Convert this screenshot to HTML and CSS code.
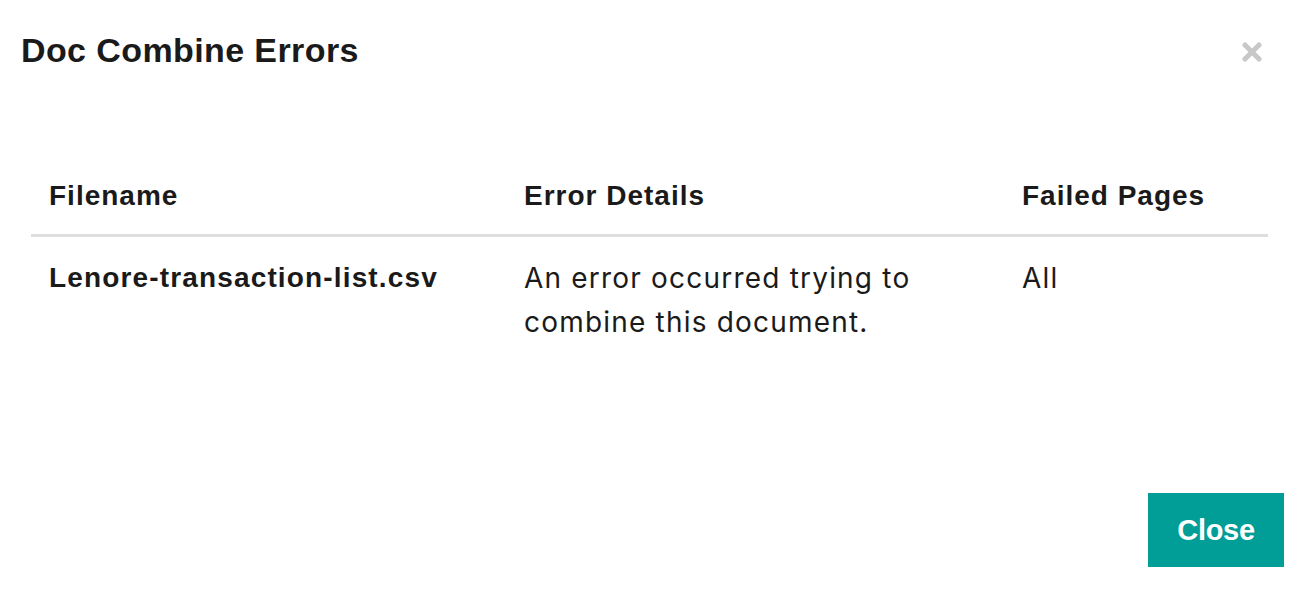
FILE: index.html
```html
<!DOCTYPE html>
<html lang="en">
<head>
<meta charset="utf-8">
<title>Doc Combine Errors</title>
<link rel="stylesheet" href="styles.css">
</head>
<body>
<div class="modal">
  <div class="modal-header">
    <h1 class="modal-title">Doc Combine Errors</h1>
    <button class="modal-x" aria-label="Close">
      <svg width="20" height="20" viewBox="0 0 20 20">
        <path d="M3 3 L17 17 M17 3 L3 17" stroke="#c8c8c8" stroke-width="5" stroke-linecap="round" fill="none"/>
      </svg>
    </button>
  </div>
  <div class="modal-body">
    <table class="errors">
      <colgroup>
        <col class="c-file">
        <col class="c-detail">
        <col class="c-pages">
      </colgroup>
      <thead>
        <tr>
          <th>Filename</th>
          <th>Error Details</th>
          <th>Failed Pages</th>
        </tr>
      </thead>
      <tbody>
        <tr>
          <td class="fname">Lenore-transaction-list.csv</td>
          <td>An error occurred trying to combine this document.</td>
          <td>All</td>
        </tr>
      </tbody>
    </table>
  </div>
  <div class="modal-footer">
    <button class="btn-close">Close</button>
  </div>
</div>
</body>
</html>
```
FILE: styles.css
```css
html, body {
  margin: 0;
  padding: 0;
  background: #ffffff;
}

body {
  font-family: "Liberation Sans", Arial, sans-serif;
  color: #1a1a1a;
}

.modal {
  height: 598px;
  display: flex;
  flex-direction: column;
  box-sizing: border-box;
}

.modal-header {
  display: flex;
  justify-content: space-between;
  align-items: flex-start;
  padding: 30px 54px 0 21px;
}

.modal-title {
  margin: 0;
  font-size: 34px;
  line-height: 40px;
  font-weight: 700;
  letter-spacing: 0.4px;
  color: #1a1a1a;
}

.modal-x {
  margin-top: 12px;
  padding: 0;
  border: 0;
  background: none;
  width: 20px;
  height: 20px;
  display: block;
  cursor: pointer;
}

.modal-x svg {
  display: block;
}

.modal-body {
  flex: 1;
  padding: 92px 48px 0 31px;
}

.errors {
  width: 100%;
  table-layout: fixed;
  border-collapse: collapse;
}

.c-file { width: 475px; }
.c-detail { width: 498px; }
.c-pages { width: auto; }

.errors th {
  text-align: left;
  vertical-align: top;
  font-family: "Liberation Sans", Arial, sans-serif;
  font-weight: 700;
  font-size: 28px;
  line-height: 32px;
  letter-spacing: 1px;
  padding: 18px 18px 22px 18px;
  border-bottom: 3px solid #dedede;
  color: #1a1a1a;
}

.errors td {
  vertical-align: top;
  font-family: "Inter", "Liberation Sans", sans-serif;
  font-size: 28px;
  line-height: 44px;
  letter-spacing: 1.2px;
  padding: 19px 18px 18px 18px;
  color: #1a1a1a;
}

.errors td.fname {
  font-family: "Liberation Sans", Arial, sans-serif;
  font-weight: 700;
  font-size: 28px;
  letter-spacing: 1.15px;
}

.modal-footer {
  display: flex;
  justify-content: flex-end;
  padding: 0 32px 31px 0;
}

.btn-close {
  width: 136px;
  height: 74px;
  border: 0;
  background: #009e97;
  color: #ffffff;
  font-family: "Liberation Sans", Arial, sans-serif;
  font-weight: 700;
  font-size: 29px;
  letter-spacing: -0.3px;
  padding: 0;
  cursor: pointer;
}
```
